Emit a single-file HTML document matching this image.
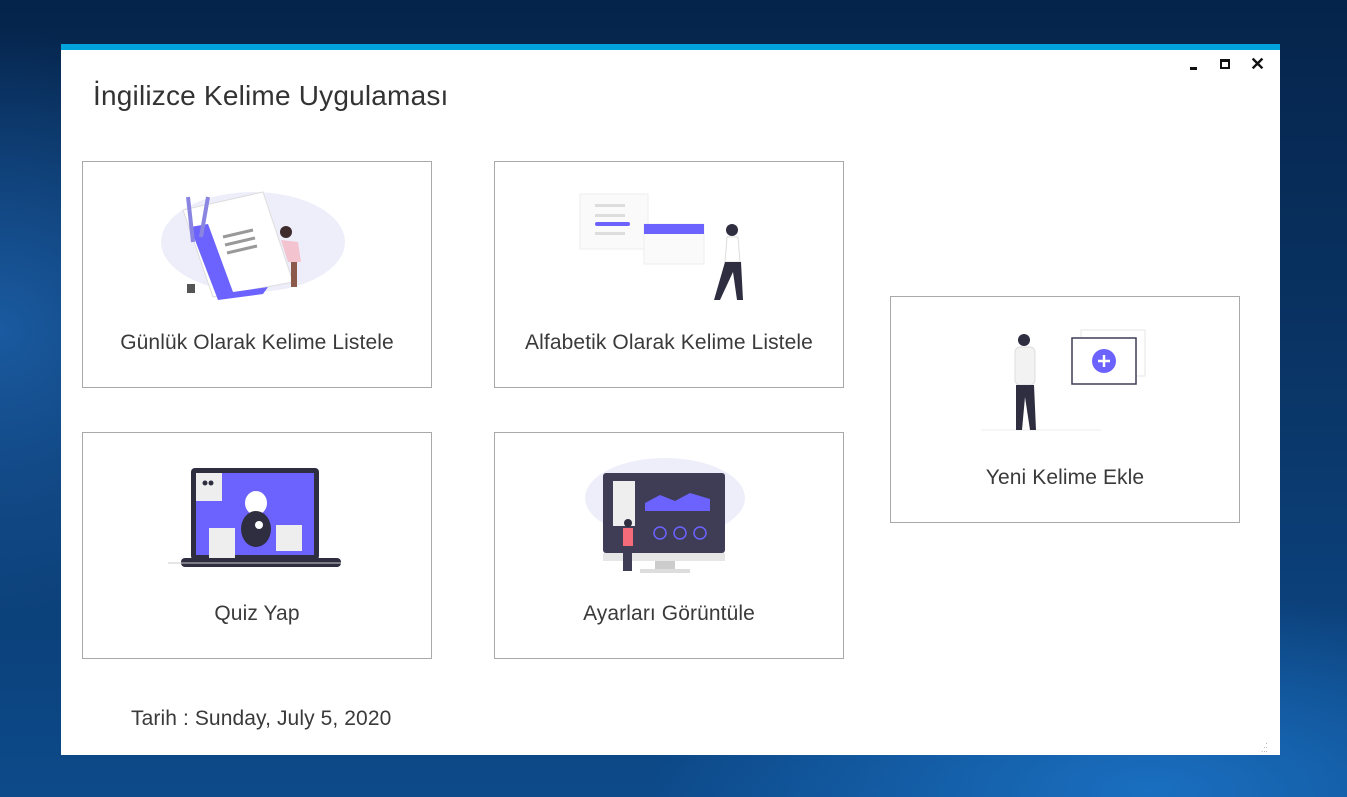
<!DOCTYPE html>
<html><head><meta charset="utf-8"><style>
*{margin:0;padding:0;box-sizing:border-box}
body{width:1347px;height:797px;overflow:hidden;position:relative;font-family:"Liberation Sans",sans-serif;
background:radial-gradient(ellipse 500px 200px at 1150px 790px,#1a6fc0 0%,rgba(20,90,170,0) 100%),
radial-gradient(ellipse 300px 300px at 0px 330px,#1a5aa0 0%,rgba(20,80,150,0) 100%),
linear-gradient(180deg,#05244b 0%,#0a3668 50%,#0d4a8a 100%);}
.win{position:absolute;left:61px;top:44px;width:1219px;height:711px;background:#fff;border-top:6px solid #00a3dc}
.title{position:absolute;left:32px;top:30px;font-size:28px;color:#333;letter-spacing:0.2px}
.card{position:absolute;width:350px;height:227px;border:1px solid #a9a9a9;background:#fff}
.card .lbl{position:absolute;left:0;right:0;top:169px;text-align:center;font-size:21px;color:#3a3a3a;letter-spacing:0.1px}
.card svg{position:absolute}
.date{position:absolute;left:70px;top:657px;font-size:21px;color:#3a3a3a;letter-spacing:0.1px}
</style></head><body>
<div class="win">
<div class="title">İngilizce Kelime Uygulaması</div>
<div style="position:absolute;left:1129px;top:17px;width:7px;height:3px;background:#111"></div>
<div style="position:absolute;left:1159px;top:9px;width:10px;height:10px;border:2px solid #111;border-top-width:3px"></div>
<div style="position:absolute;left:1189px;top:4px;font-size:18px;font-weight:bold;color:#111">✕</div>
<div style="position:absolute;left:1200px;top:690px;font-size:8px;color:#999;line-height:4px">&nbsp;&nbsp;.<br>&nbsp;..<br>...</div>

<div class="card" style="left:21px;top:111px">
<svg width="350" height="150" viewBox="0 0 350 150">
<ellipse cx="170" cy="80" rx="92" ry="50" fill="#eeeefb"/>
<path d="M100 48 L180 30 L210 120 L130 135Z" fill="#fff" stroke="#ddd"/>
<path d="M107 65 L125 62 L150 130 L185 125 L180 132 L135 138Z" fill="#6c63ff"/>
<g stroke="#999" stroke-width="3"><line x1="140" y1="75" x2="170" y2="68"/><line x1="142" y1="83" x2="172" y2="76"/><line x1="144" y1="91" x2="174" y2="84"/></g>
<path d="M105 35 L110 80" stroke="#8a85e0" stroke-width="4"/><path d="M125 35 L118 75" stroke="#8a85e0" stroke-width="4"/>
<circle cx="203" cy="70" r="6" fill="#3f2b2b"/><path d="M198 78 L215 80 L218 100 L205 100Z" fill="#f3c4d0"/>
<rect x="208" y="100" width="6" height="25" fill="#8b5a4a"/>
<rect x="104" y="122" width="8" height="9" fill="#555"/>
</svg>
<div class="lbl">Günlük Olarak Kelime Listele</div></div>

<div class="card" style="left:433px;top:111px">
<svg width="350" height="150" viewBox="0 0 350 150">
<rect x="85" y="32" width="68" height="55" fill="#fafafa" stroke="#eee"/>
<g fill="#ddd"><rect x="100" y="42" width="30" height="3"/><rect x="100" y="52" width="30" height="3"/><rect x="100" y="70" width="30" height="3"/></g>
<rect x="100" y="60" width="35" height="4" rx="2" fill="#6c63ff"/>
<rect x="149" y="62" width="60" height="40" fill="#fafafa" stroke="#eee"/>
<rect x="149" y="62" width="60" height="10" fill="#6c63ff"/>
<circle cx="237" cy="68" r="6" fill="#2f2e41"/>
<path d="M232 75 L243 75 L245 100 L230 100Z" fill="#fff" stroke="#ddd"/>
<path d="M230 100 L246 100 L248 138 L242 138 L238 110 L225 138 L219 138Z" fill="#2f2e41"/>
</svg>
<div class="lbl">Alfabetik Olarak Kelime Listele</div></div>

<div class="card" style="left:21px;top:382px">
<svg width="350" height="150" viewBox="0 0 350 150">
<rect x="108" y="35" width="128" height="92" rx="4" fill="#2f2e41"/>
<rect x="113" y="40" width="118" height="82" fill="#6c63ff"/>
<rect x="98" y="125" width="160" height="9" rx="4" fill="#2f2e41"/>
<line x1="85" y1="130" x2="258" y2="130" stroke="#ccc"/>
<rect x="113" y="40" width="26" height="28" fill="#eee"/>
<circle cx="122" cy="50" r="2.5" fill="#2f2e41"/><circle cx="128" cy="50" r="2.5" fill="#2f2e41"/>
<rect x="126" y="95" width="26" height="30" fill="#eee"/><rect x="193" y="92" width="26" height="26" fill="#eee"/>
<ellipse cx="173" cy="70" rx="11" ry="12" fill="#fff"/><ellipse cx="173" cy="96" rx="15" ry="18" fill="#2f2e41"/>
<circle cx="176" cy="92" r="4" fill="#fff"/>
</svg>
<div class="lbl">Quiz Yap</div></div>

<div class="card" style="left:433px;top:382px">
<svg width="350" height="150" viewBox="0 0 350 150">
<ellipse cx="170" cy="65" rx="80" ry="40" fill="#eeeefb"/>
<rect x="108" y="40" width="122" height="80" rx="3" fill="#3f3d56"/>
<rect x="118" y="48" width="22" height="45" fill="#eee"/>
<path d="M150 70 L165 62 L180 68 L195 60 L215 66 L215 78 L150 78Z" fill="#6c63ff"/>
<g fill="none" stroke="#6c63ff" stroke-width="1.5"><circle cx="165" cy="100" r="6"/><circle cx="185" cy="100" r="6"/><circle cx="205" cy="100" r="6"/></g>
<rect x="108" y="120" width="122" height="8" fill="#e6e6e6"/><rect x="160" y="128" width="20" height="10" fill="#ccc"/><rect x="145" y="136" width="50" height="4" fill="#ddd"/>
<circle cx="133" cy="90" r="4" fill="#2f2e41"/><rect x="128" y="95" width="10" height="18" fill="#f56b7a"/>
<rect x="128" y="113" width="9" height="25" fill="#3f3d56"/>
</svg>
<div class="lbl">Ayarları Görüntüle</div></div>

<div class="card" style="left:829px;top:246px">
<svg width="350" height="150" viewBox="0 0 350 150">
<line x1="90" y1="133" x2="210" y2="133" stroke="#eee"/>
<circle cx="133" cy="43" r="6" fill="#2f2e41"/>
<rect x="124" y="50" width="20" height="38" rx="5" fill="#f2f2f2" stroke="#ddd"/>
<path d="M125 88 L143 88 L145 133 L139 133 L134 100 L131 133 L125 133Z" fill="#2f2e41"/>
<rect x="190" y="33" width="64" height="46" fill="#fff" stroke="#e6e6e6"/>
<rect x="181" y="41" width="64" height="46" fill="#fff" stroke="#3f3d56" stroke-width="1.5"/>
<circle cx="213" cy="64" r="12" fill="#6c63ff"/>
<path d="M213 58 V70 M207 64 H219" stroke="#fff" stroke-width="2.5"/>
</svg>
<div class="lbl">Yeni Kelime Ekle</div></div>

<div class="date">Tarih : Sunday, July 5, 2020</div>
</div>
</body></html>
